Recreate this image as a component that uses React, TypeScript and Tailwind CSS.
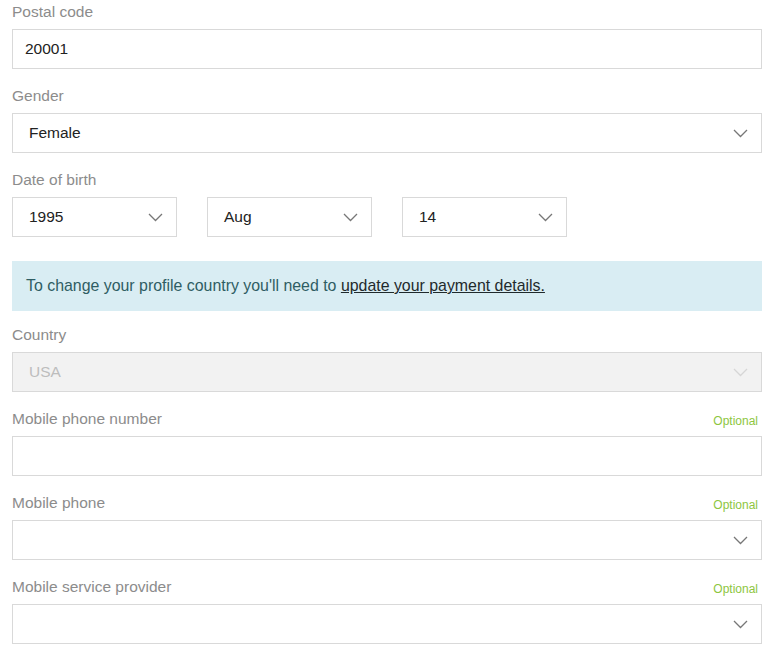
import { ReactNode } from "react";

function Chevron({ light }: { light?: boolean }) {
  return (
    <svg
      width="15"
      height="9"
      viewBox="0 0 15 9"
      fill="none"
      className={light ? "text-[#d6d6d6]" : "text-[#777777]"}
    >
      <path d="M1 1l6.5 6.5L14 1" stroke="currentColor" strokeWidth="1.3" />
    </svg>
  );
}

function Field({
  label,
  optional,
  children,
  className = "",
}: {
  label: string;
  optional?: boolean;
  children: ReactNode;
  className?: string;
}) {
  return (
    <div className={className}>
      <div className="flex items-end justify-between h-5 mb-[7px]">
        <span className="text-[15.5px] leading-5 text-[#8c8c8c]">{label}</span>
        {optional ? (
          <span className="text-[12px] leading-4 text-[#8dc63f] pr-1">Optional</span>
        ) : null}
      </div>
      {children}
    </div>
  );
}

function Select({ value, width, disabled }: { value?: string; width?: string; disabled?: boolean }) {
  return (
    <div
      className={`flex items-center justify-between h-10 border border-[#d9d9d9] pl-4 pr-[13px] ${
        disabled ? "bg-[#f2f2f2]" : "bg-white"
      } ${width ?? "w-full"}`}
    >
      <span className={`text-[15.5px] ${disabled ? "text-[#bdbdbd]" : "text-[#222222]"}`}>{value}</span>
      <Chevron light={disabled} />
    </div>
  );
}

export default function App() {
  return (
    <div className="min-h-screen bg-white font-['Liberation_Sans',Arial,sans-serif]">
      <div className="w-[750px] ml-3 pt-[2px]">
        <Field label="Postal code" className="mb-[17px]">
          <div className="flex items-center h-10 border border-[#d9d9d9] px-3">
            <span className="text-[15.5px] text-[#222222]">20001</span>
          </div>
        </Field>

        <Field label="Gender" className="mb-[17px]">
          <Select value="Female" />
        </Field>

        <Field label="Date of birth" className="mb-[24px]">
          <div className="flex gap-[30px]">
            <Select value="1995" width="w-[165px]" />
            <Select value="Aug" width="w-[165px]" />
            <Select value="14" width="w-[165px]" />
          </div>
        </Field>

        <div className="flex items-center h-[50px] bg-[#d9edf3] px-[14px] mb-[14px]">
          <p className="text-[15.9px] text-[#2f5d63]">
            To change your profile country you'll need to{" "}
            <a className="underline text-[#1f2a2c]">update your payment details.</a>
          </p>
        </div>

        <Field label="Country" className="mb-[17px]">
          <Select value="USA" disabled />
        </Field>

        <Field label="Mobile phone number" optional className="mb-[17px]">
          <div className="h-10 border border-[#d9d9d9] bg-white" />
        </Field>

        <Field label="Mobile phone" optional className="mb-[17px]">
          <Select />
        </Field>

        <Field label="Mobile service provider" optional>
          <Select />
        </Field>
      </div>
    </div>
  );
}
